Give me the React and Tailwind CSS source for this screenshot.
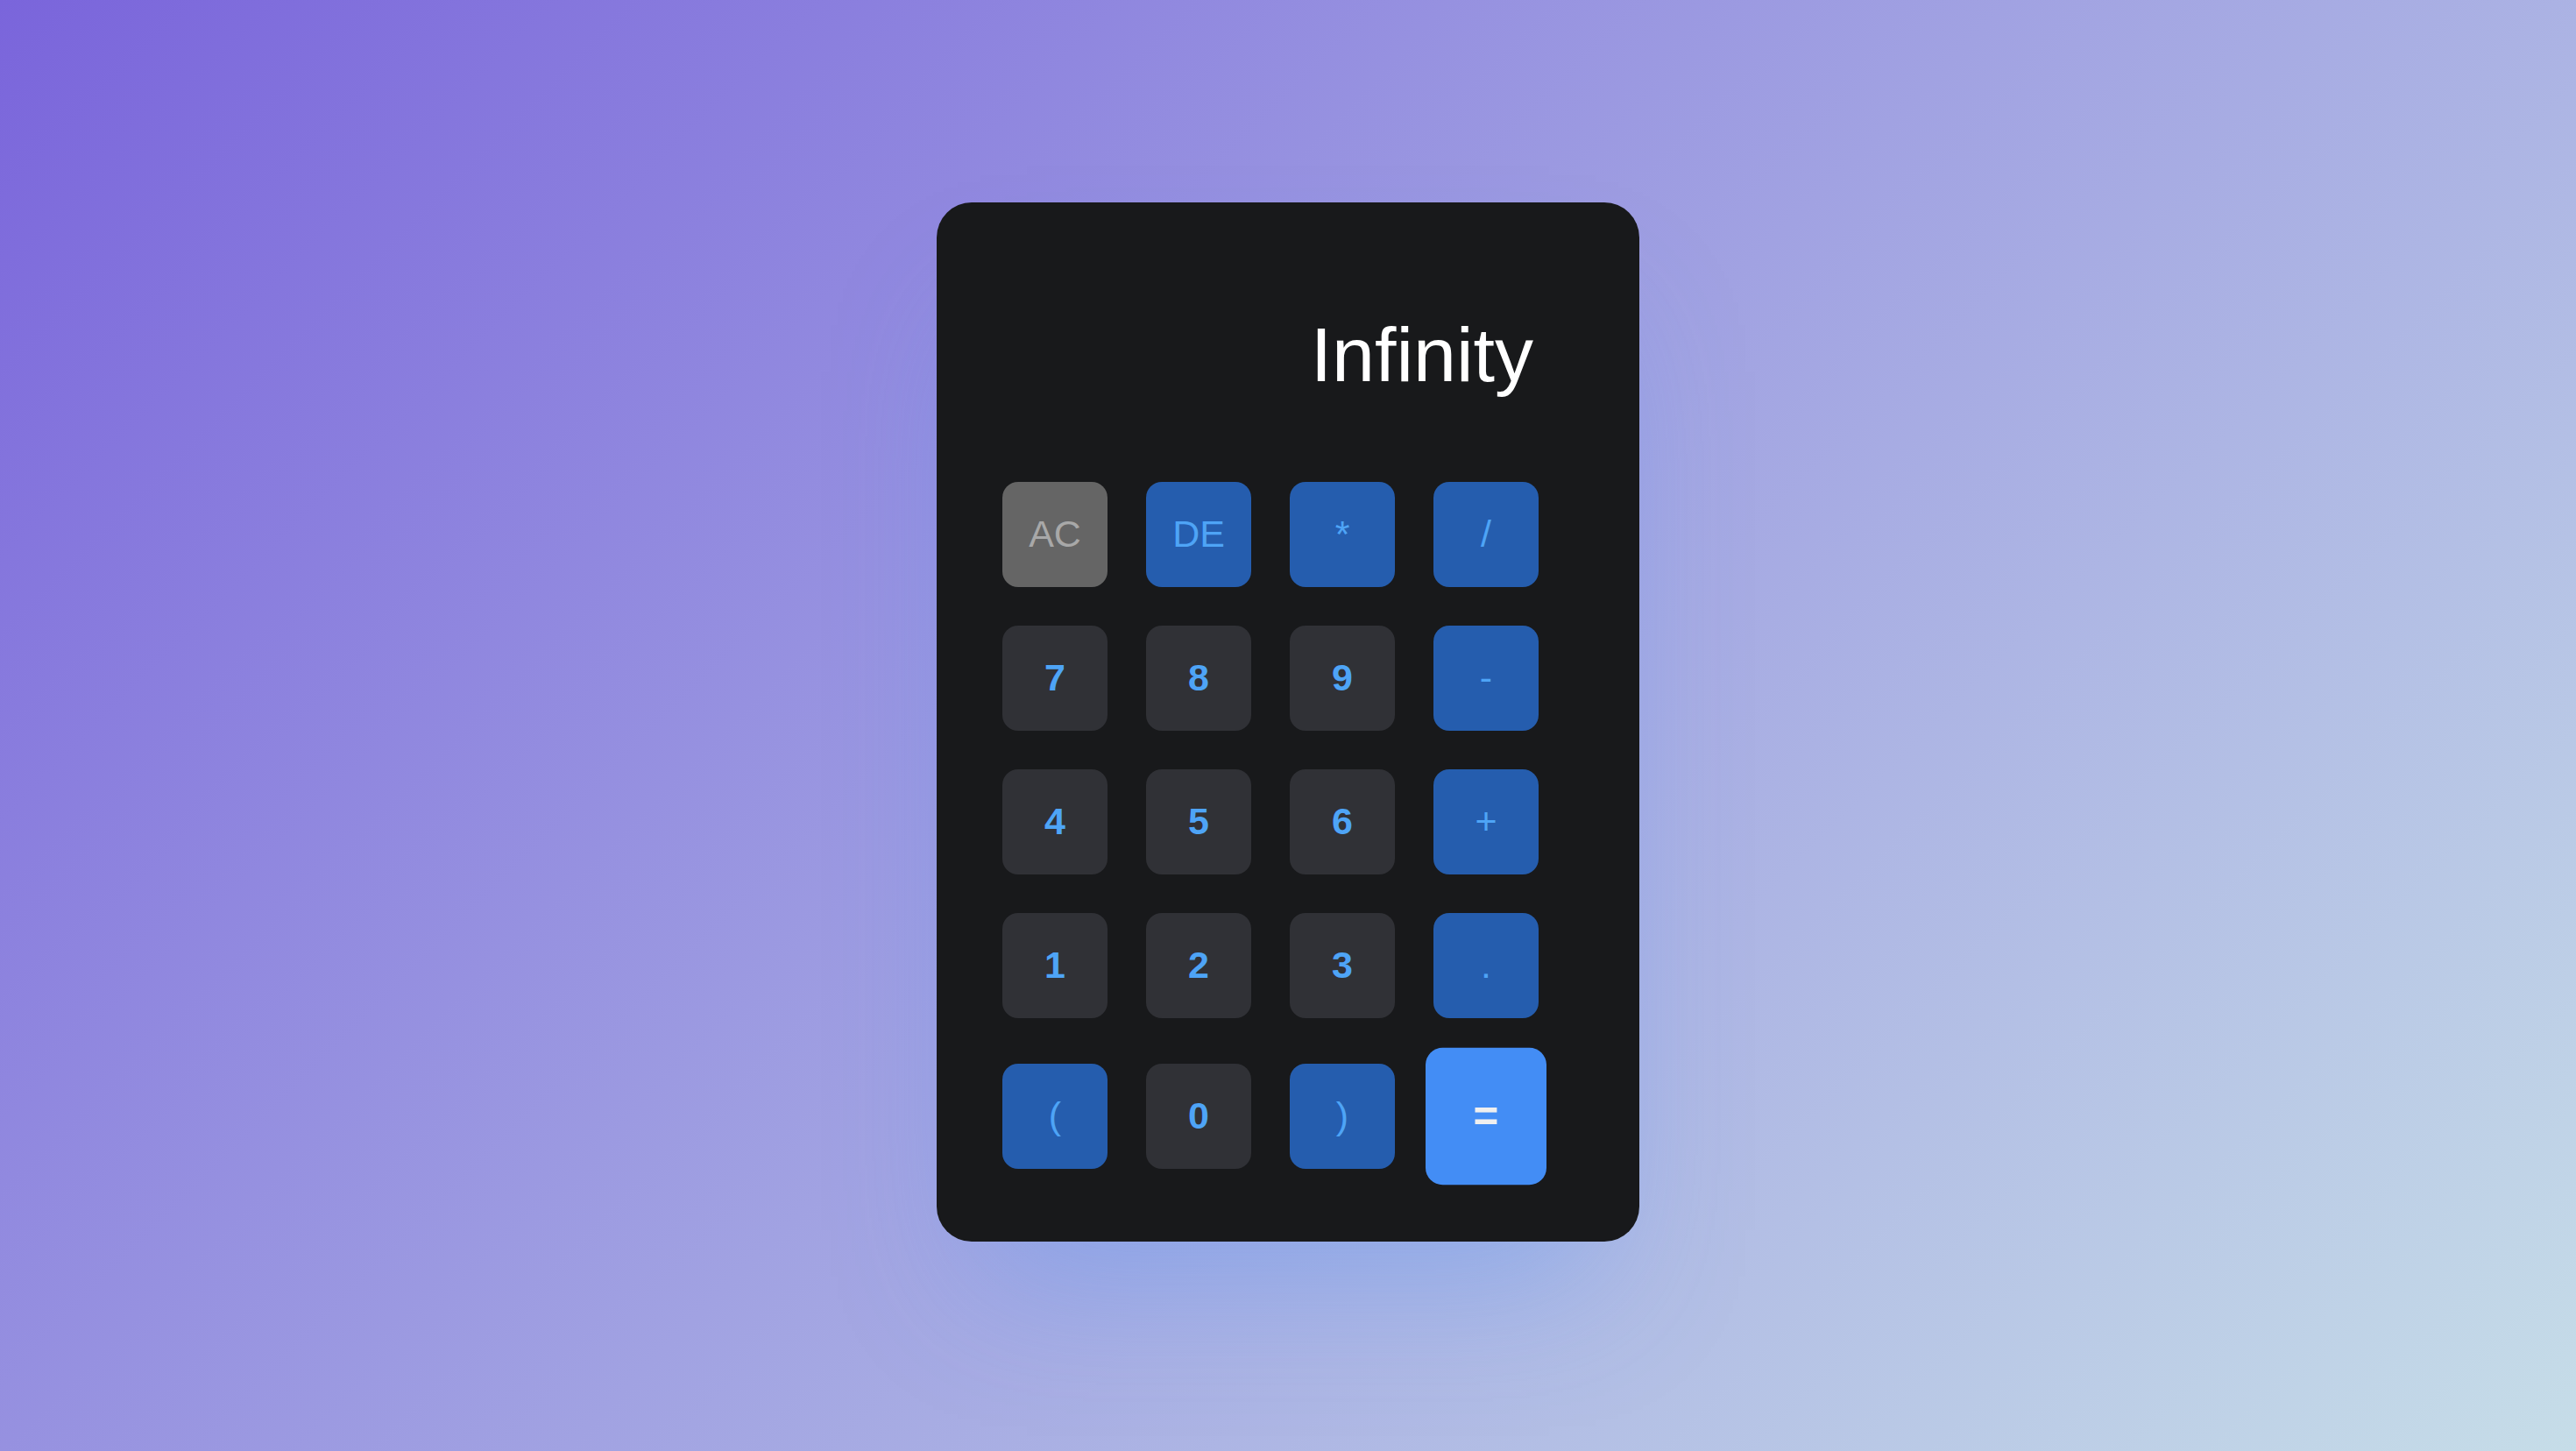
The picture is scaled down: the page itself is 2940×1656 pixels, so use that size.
import React from "react";

const keys = [
  { label: "AC", kind: "clear" },
  { label: "DE", kind: "op" },
  { label: "*", kind: "op" },
  { label: "/", kind: "op" },
  { label: "7", kind: "num" },
  { label: "8", kind: "num" },
  { label: "9", kind: "num" },
  { label: "-", kind: "op" },
  { label: "4", kind: "num" },
  { label: "5", kind: "num" },
  { label: "6", kind: "num" },
  { label: "+", kind: "op" },
  { label: "1", kind: "num" },
  { label: "2", kind: "num" },
  { label: "3", kind: "num" },
  { label: ".", kind: "op" },
  { label: "(", kind: "op" },
  { label: "0", kind: "num" },
  { label: ")", kind: "op" },
  { label: "=", kind: "eq" },
];

function Key({ label, kind }) {
  if (kind === "eq") {
    return (
      <button className="w-[120px] h-[136px] rounded-[17px] bg-[#438df5] text-[#efefef] text-[43px] font-bold scale-[1.15] flex items-center justify-center leading-none">
        {label}
      </button>
    );
  }
  if (kind === "clear") {
    return (
      <button className="w-[120px] h-[120px] rounded-[18px] bg-[#656565] text-[#a8a8a8] text-[43px] font-normal flex items-center justify-center leading-none">
        {label}
      </button>
    );
  }
  if (kind === "op") {
    return (
      <button className="w-[120px] h-[120px] rounded-[18px] bg-[#255dae] text-[#4ea4f6] text-[43px] font-normal flex items-center justify-center leading-none">
        {label}
      </button>
    );
  }
  return (
    <button className="w-[120px] h-[120px] rounded-[18px] bg-[#303136] text-[#4ea4f6] text-[43px] font-bold flex items-center justify-center leading-none">
      {label}
    </button>
  );
}

export default function App() {
  return (
    <div
      className="w-full h-[1656px] flex items-center justify-center pb-[9px] bg-[linear-gradient(135deg,#7a65db_0%,#a1a2e2_50%,#c6dde8_100%)]"
      style={{ fontFamily: '"Liberation Sans", Arial, Helvetica, sans-serif' }}
    >
      <div className="w-[802px] rounded-[40px] bg-[#18191b] p-[75px] shadow-[0_90px_150px_-50px_rgba(80,145,240,0.35)]">
        <div className="w-[612px] h-[200px] mb-[44px] flex items-end justify-end pb-[57px] pr-[6px]">
          <div className="text-white text-[88px] leading-none font-normal">Infinity</div>
        </div>
        <div className="grid grid-cols-[repeat(4,120px)] gap-[44px] items-center justify-items-center">
          {keys.map((k, i) => (
            <Key key={i} label={k.label} kind={k.kind} />
          ))}
        </div>
      </div>
    </div>
  );
}
